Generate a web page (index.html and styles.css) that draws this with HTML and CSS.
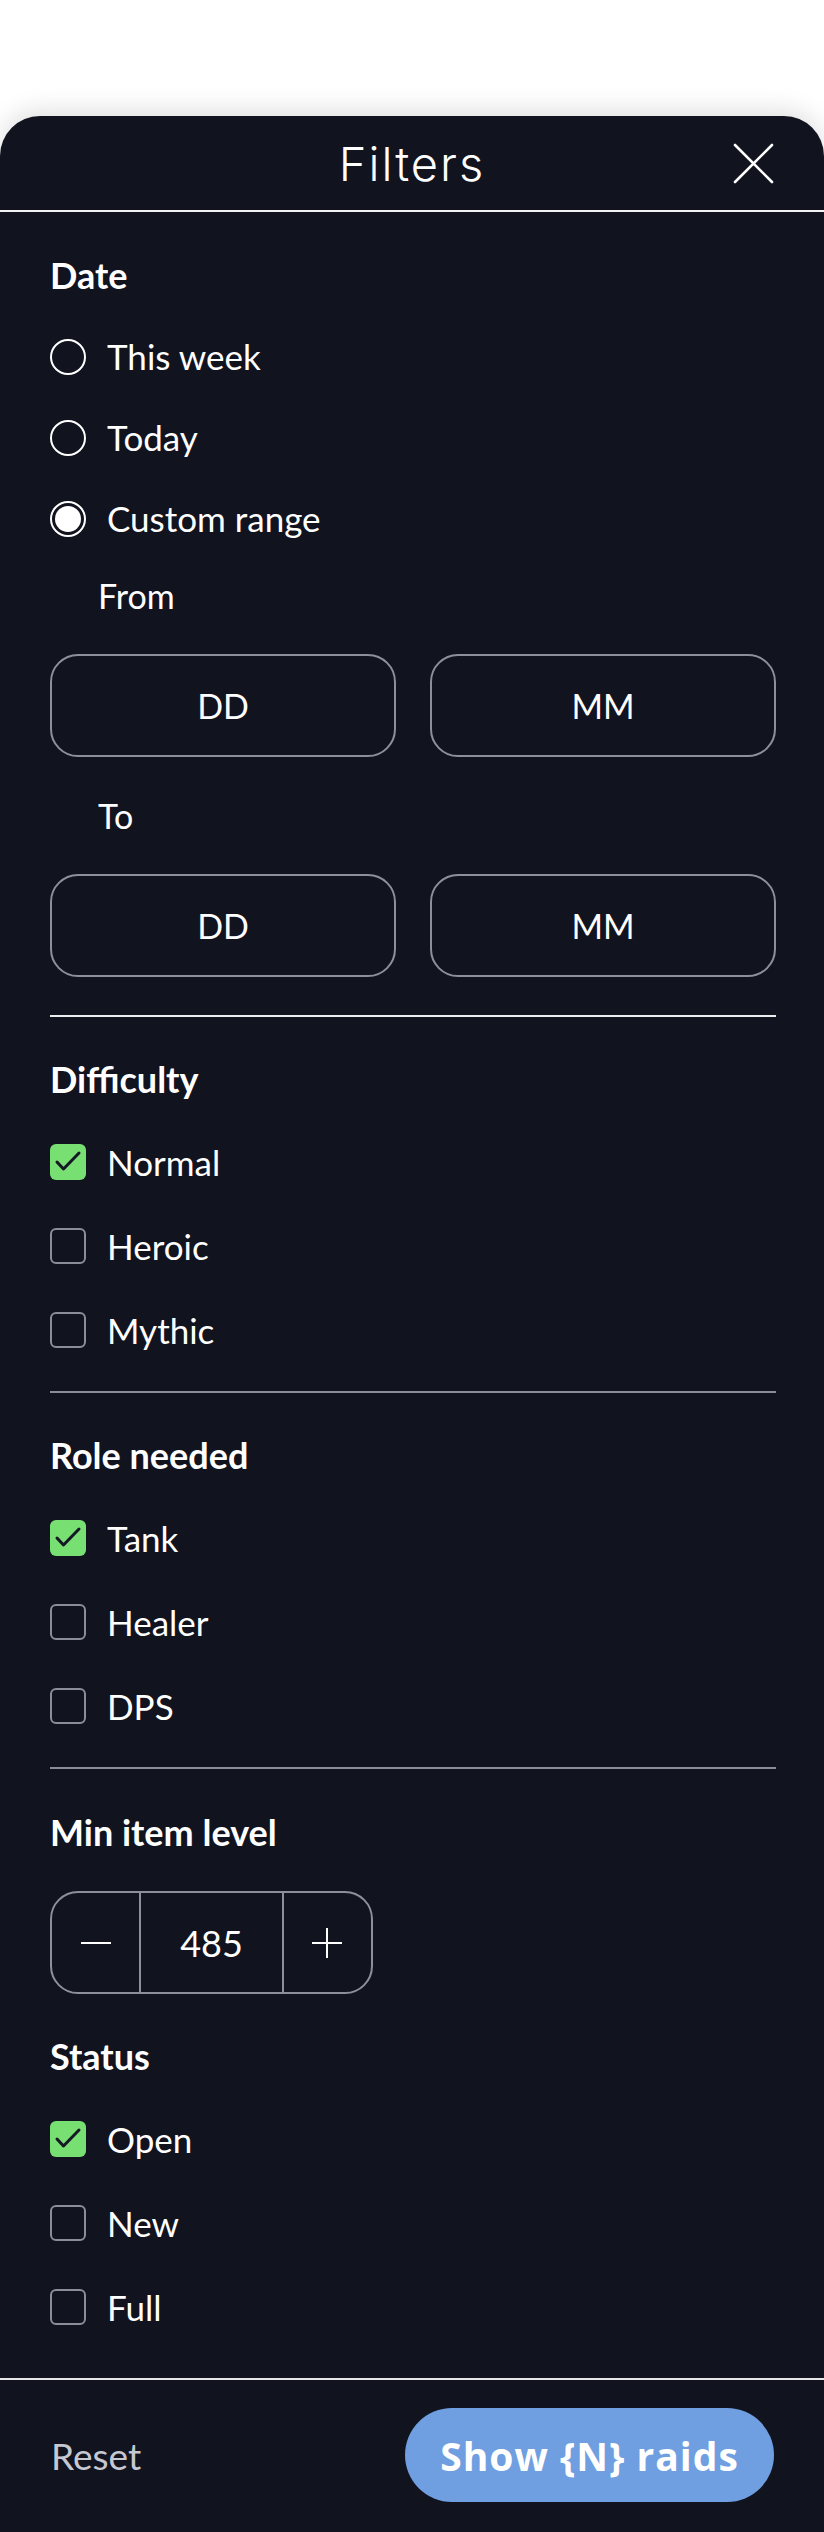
FILE: index.html
```html
<!DOCTYPE html>
<html lang="en">
<head>
    <meta charset="UTF-8">
    <meta name="viewport" content="width=device-width, initial-scale=1.0">
    <title>Filters</title>
    <link rel="stylesheet" href="styles.css">
</head>
<body>
    <div class="sheet">
        <!-- Header -->
        <div class="sheet-header">
            <h1>Filters</h1>
            <button class="close" aria-label="Close">
                <svg width="41" height="41" viewBox="0 0 41 41">
                    <path d="M2 2 L39 39 M39 2 L2 39" stroke="#fff" stroke-width="2.6" stroke-linecap="round"/>
                </svg>
            </button>
        </div>

        <div class="sheet-body">
            <!-- Date -->
            <section class="group group-date">
                <h2>Date</h2>
                <ul class="options radios">
                    <li><span class="radio"></span>This week</li>
                    <li><span class="radio"></span>Today</li>
                    <li><span class="radio checked"></span>Custom range</li>
                </ul>
                <div class="sub-label">From</div>
                <div class="date-row">
                    <div class="field">DD</div>
                    <div class="field">MM</div>
                </div>
                <div class="sub-label">To</div>
                <div class="date-row">
                    <div class="field">DD</div>
                    <div class="field">MM</div>
                </div>
            </section>

            <!-- Difficulty -->
            <section class="group">
                <h2>Difficulty</h2>
                <ul class="options checks">
                    <li><span class="box checked"><svg viewBox="0 0 36 36"><path d="M7 18 L13.5 25 L29 9"/></svg></span>Normal</li>
                    <li><span class="box"></span>Heroic</li>
                    <li><span class="box"></span>Mythic</li>
                </ul>
            </section>

            <!-- Role needed -->
            <section class="group">
                <h2>Role needed</h2>
                <ul class="options checks">
                    <li><span class="box checked"><svg viewBox="0 0 36 36"><path d="M7 18 L13.5 25 L29 9"/></svg></span>Tank</li>
                    <li><span class="box"></span>Healer</li>
                    <li><span class="box"></span>DPS</li>
                </ul>
            </section>

            <!-- Min item level -->
            <section class="group group-level">
                <h2>Min item level</h2>
                <div class="stepper">
                    <button class="step">
                        <svg width="30" height="30" viewBox="0 0 30 30"><path d="M0 15 H30" stroke="#fff" stroke-width="2"/></svg>
                    </button>
                    <div class="step-value">485</div>
                    <button class="step">
                        <svg width="30" height="30" viewBox="0 0 30 30"><path d="M0 15 H30 M15 0 V30" stroke="#fff" stroke-width="2"/></svg>
                    </button>
                </div>
            </section>

            <!-- Status -->
            <section class="group group-status">
                <h2>Status</h2>
                <ul class="options checks">
                    <li><span class="box checked"><svg viewBox="0 0 36 36"><path d="M7 18 L13.5 25 L29 9"/></svg></span>Open</li>
                    <li><span class="box"></span>New</li>
                    <li><span class="box"></span>Full</li>
                </ul>
            </section>
        </div>

        <!-- Footer -->
        <div class="sheet-footer">
            <button class="reset">Reset</button>
            <button class="show">Show {N} raids</button>
        </div>
    </div>
</body>
</html>
```

FILE: styles.css
```css
body {
    margin: 0;
    background-color: #fff;
    font-family: 'Lato', 'Open Sans', sans-serif;
    color: #fff;
}

.sheet {
    margin-top: 116px;
    background-color: #11131f;
    border-radius: 40px 40px 0 0;
    box-shadow: 0 -6px 24px rgba(0, 0, 0, 0.12);
    min-height: 2416px;
}

.sheet-header {
    height: 94px;
    border-bottom: 2px solid #f2f2f2;
    display: flex;
    align-items: center;
    justify-content: center;
    position: relative;
}

.sheet-header h1 {
    margin: 0;
    font-family: 'Inter', sans-serif;
    font-weight: 300;
    font-size: 47px;
    letter-spacing: 2px;
    line-height: 1;
}

.close {
    position: absolute;
    right: 50px;
    top: 27px;
    width: 41px;
    height: 41px;
    padding: 0;
    border: none;
    background: none;
    cursor: pointer;
}

.close svg {
    display: block;
}

.sheet-body {
    padding: 0 48px 0 50px;
}

.group {
    padding: 40px 0 19px;
    border-bottom: 2px solid #8a8d96;
}

.group-date {
    padding-top: 41px;
    padding-bottom: 38px;
    border-bottom-color: #ededed;
}

.group-level {
    border-bottom: none;
    padding-top: 41px;
    padding-bottom: 0;
}

.group-status {
    border-bottom: none;
    padding-top: 40px;
    padding-bottom: 29px;
}

h2 {
    margin: 0 0 19px;
    font-size: 36px;
    font-weight: 700;
    line-height: 44px;
}

.options {
    list-style: none;
    margin: 0;
    padding: 0;
}

.options li {
    display: flex;
    align-items: center;
    gap: 21px;
    font-size: 35px;
    line-height: 1;
}

.radios li {
    height: 81px;
}

.checks li {
    height: 84px;
}

.radio {
    box-sizing: border-box;
    width: 36px;
    height: 36px;
    border: 2px solid #fff;
    border-radius: 50%;
    flex-shrink: 0;
    position: relative;
}

.radio.checked::after {
    content: '';
    position: absolute;
    inset: 3px;
    border-radius: 50%;
    background-color: #fff;
}

.box {
    box-sizing: border-box;
    width: 36px;
    height: 36px;
    border: 2px solid #8a8e9a;
    border-radius: 6px;
    flex-shrink: 0;
}

.box.checked {
    border: none;
    background-color: #78df72;
}

.box svg {
    display: block;
    width: 36px;
    height: 36px;
    fill: none;
    stroke: #161826;
    stroke-width: 3;
    stroke-linecap: round;
    stroke-linejoin: round;
}

.sub-label {
    margin: 15px 0 36px 48px;
    font-size: 34px;
    line-height: 44px;
}

.date-row {
    display: grid;
    grid-template-columns: 1fr 1fr;
    gap: 34px;
}

.date-row + .sub-label {
    margin-top: 37px;
}

.field {
    box-sizing: border-box;
    height: 103px;
    border: 2px solid #8b909c;
    border-radius: 28px;
    display: flex;
    align-items: center;
    justify-content: center;
    font-size: 34px;
}

.stepper {
    margin-top: 37px;
    box-sizing: border-box;
    width: 323px;
    height: 103px;
    border: 2px solid #8b909c;
    border-radius: 28px;
    display: flex;
}

.step {
    width: 89px;
    padding: 0;
    border: none;
    background: none;
    display: flex;
    align-items: center;
    justify-content: center;
    cursor: pointer;
}

.step-value {
    width: 144px;
    border-left: 2px solid #8b909c;
    border-right: 2px solid #8b909c;
    display: flex;
    align-items: center;
    justify-content: center;
    font-size: 36px;
}

.sheet-footer {
    border-top: 2px solid #e6e6e6;
    padding: 28px 50px 0 51px;
    display: flex;
    align-items: center;
    justify-content: space-between;
}

.reset {
    padding: 0;
    border: none;
    background: none;
    font-family: 'Lato', sans-serif;
    font-size: 37px;
    color: #c5c8d1;
    cursor: pointer;
}

.show {
    width: 369px;
    height: 94px;
    border: none;
    border-radius: 47px;
    background-color: #6f9fe0;
    color: #fff;
    font-family: 'Open Sans', sans-serif;
    font-weight: 700;
    font-size: 39px;
    letter-spacing: 1px;
    cursor: pointer;
}
```
